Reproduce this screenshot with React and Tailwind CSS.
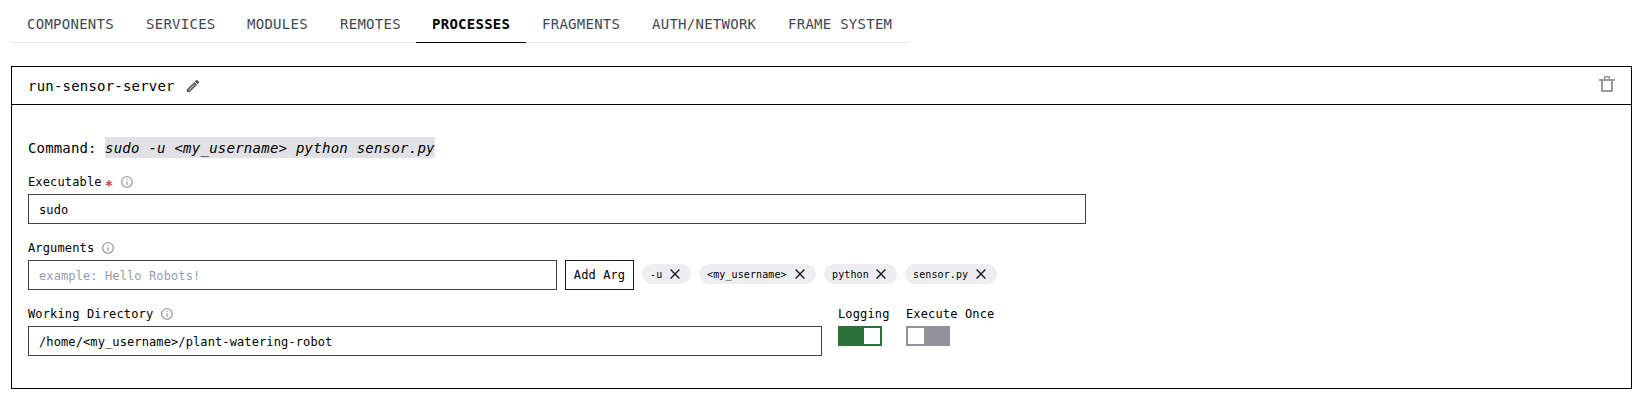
import React from "react";

const tabs = [
  { label: "COMPONENTS", size: "w-[119px]" },
  { label: "SERVICES", size: "w-[101px]" },
  { label: "MODULES", size: "w-[93px]" },
  { label: "REMOTES", size: "w-[92px]" },
  { label: "PROCESSES", size: "w-[110px]", active: true },
  { label: "FRAGMENTS", size: "w-[110px]" },
  { label: "AUTH/NETWORK", size: "w-[136px]" },
  { label: "FRAME SYSTEM", size: "w-[137px]" },
];

const args = [
  { text: "-u", width: "w-[49px]" },
  { text: "<my_username>", width: "w-[117px]" },
  { text: "python", width: "w-[73px]" },
  { text: "sensor.py", width: "w-[92px]" },
];

function InfoIcon() {
  return (
    <svg viewBox="0 0 24 24" className="size-[14px] shrink-0 fill-[#92929b]">
      <path d="M11 17h2v-6h-2v6zm1-15C6.48 2 2 6.48 2 12s4.48 10 10 10 10-4.48 10-10S17.52 2 12 2zm0 18c-4.41 0-8-3.59-8-8s3.59-8 8-8 8 3.59 8 8-3.59 8-8 8zM11 9h2V7h-2v2z" />
    </svg>
  );
}

function PencilIcon() {
  return (
    <svg viewBox="0 0 24 24" className="size-4 shrink-0 fill-[#4e4f52] stroke-[#4e4f52]" strokeWidth="0.5">
      <path d="M14.06 9.02l.92.92L5.92 19H5v-.92l9.06-9.06M17.66 3c-.25 0-.51.1-.7.29l-1.83 1.83 3.75 3.75 1.83-1.83c.39-.39.39-1.02 0-1.41l-2.34-2.34c-.2-.2-.45-.29-.71-.29zm-3.6 3.19L3 17.25V21h3.75L17.81 9.94l-3.75-3.75z" />
    </svg>
  );
}

function TrashIcon() {
  return (
    <svg viewBox="0 0 16 16" className="size-4 fill-[#9a9a9a]">
      <path d="M5 0h6v3h5v2h-2v11H2V5H0V3h5zM6.5 1.5V3h3V1.5zM4 5v9h8V5z" fillRule="evenodd" />
    </svg>
  );
}

function CloseIcon() {
  return (
    <svg viewBox="0 0 10 10" className="size-[10px] shrink-0 stroke-[#1c1c1e]" fill="none" strokeWidth="1.4">
      <path d="M.6.6l8.8 8.8M9.4.6L.6 9.4" />
    </svg>
  );
}

function Label({ children, required, info }) {
  return (
    <div className="flex h-4 items-center whitespace-pre tracking-[0.15px]">
      <span>{children}</span>
      {required && (
        <span className="h-4 w-[11px] pl-[3px] pt-[3px] text-[14px] font-bold leading-4 text-[#c93a3c]">*</span>
      )}
      {info && <span className="ml-[7px] flex"><InfoIcon /></span>}
    </div>
  );
}

function Toggle({ on }) {
  return (
    <div
      className={
        on
          ? "flex h-5 w-11 justify-end border-2 border-[#2b7239] bg-[#2b7239]"
          : "flex h-5 w-11 justify-start border-2 border-[#92929b] bg-[#92929b]"
      }
    >
      <div className="size-4 bg-white" />
    </div>
  );
}

export default function App() {
  return (
    <div className="h-[403px] w-[1650px] overflow-hidden bg-white pl-[11px] pr-[18px] font-['DejaVu_Sans_Mono',monospace] text-black">
      <nav className="flex h-[43px] w-[898px] text-[14px] tracking-[0.26px]">
        {tabs.map((t) => (
          <div
            key={t.label}
            className={`flex items-center whitespace-pre border-b pl-4 pt-[6px] ${t.size} ${
              t.active ? "border-black font-bold text-black" : "border-[#e4e4e6] text-[#414853]"
            }`}
          >
            {t.label}
          </div>
        ))}
      </nav>

      <section className="mt-[23px] h-[323px] border border-black">
        <header className="flex h-[38px] items-center justify-between border-b border-black px-4">
          <div className="flex items-center gap-[10px]">
            <h2 className="pt-[2px] text-[14px] tracking-[0.2px]">run-sensor-server</h2>
            <PencilIcon />
          </div>
          <div className="pb-[3px]">
            <TrashIcon />
          </div>
        </header>

        <div className="pl-4 pt-8 text-[12px] tracking-[0.11px]">
          <div className="flex h-[21px] items-center whitespace-pre text-[14px]">
            <span className="w-[77px] pt-[2px] tracking-[0.16px]">Command:</span>
            <code className="h-[21px] w-[330px] bg-[#e1e1e6] pt-px font-['DejaVu_Sans_Mono',monospace] italic leading-[21px] tracking-[0.25px]">
              {"sudo -u <my_username> python sensor.py"}
            </code>
          </div>

          <div className="mt-4 flex h-[50px] flex-col justify-between">
            <Label required info>Executable</Label>
            <div className="flex h-[30px] w-[1058px] items-center border border-[#434345] pl-[10px] pt-[2px]">sudo</div>
          </div>

          <div className="mt-4 flex h-[50px] flex-col justify-between">
            <Label info>Arguments</Label>
            <div className="flex gap-2">
              <div className="flex h-[30px] w-[529px] items-center border border-[#434345] pl-[10px] pt-[2px] text-[#949dac]">
                example: Hello Robots!
              </div>
              <button className="h-[30px] w-[69px] whitespace-pre border border-[#1c1c1e] text-center tracking-[0.11px]">Add Arg</button>
              <div className="mt-1 flex gap-2">
                {args.map((a) => (
                  <div
                    key={a.text}
                    className={`flex h-5 items-center justify-between rounded-full bg-[#eeeef0] pl-2 pr-[11px] text-[10px] ${a.width}`}
                  >
                    <span>{a.text}</span>
                    <CloseIcon />
                  </div>
                ))}
              </div>
            </div>
          </div>

          <div className="mt-4 flex gap-4">
            <div className="flex h-[50px] flex-col justify-between">
              <Label info>Working Directory</Label>
              <div className="flex h-[30px] w-[794px] items-center border border-[#434345] pl-[10px] pt-[2px]">
                {"/home/<my_username>/plant-watering-robot"}
              </div>
            </div>
            <div className="flex w-[52px] flex-col gap-1">
              <Label>Logging</Label>
              <Toggle on />
            </div>
            <div className="flex flex-col gap-1">
              <Label>Execute Once</Label>
              <Toggle />
            </div>
          </div>
        </div>
      </section>
    </div>
  );
}
